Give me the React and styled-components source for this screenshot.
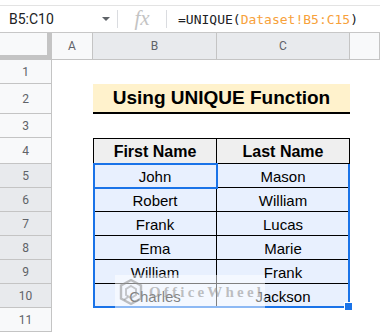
import React from 'react';
import styled, { createGlobalStyle } from 'styled-components';

const GlobalStyle = createGlobalStyle`
  html, body {
    margin: 0;
    padding: 0;
    background: #ffffff;
    font-family: Roboto, 'Noto Sans', sans-serif;
  }
`;

const Page = styled.div`
  width: 380px;
  height: 332px;
  overflow: hidden;
  position: relative;
  background: #fff;
`;

// formula bar
const FormulaBar = styled.div`
  margin-top: 5px;
  height: 28px;
  box-sizing: border-box;
  border-top: 1px solid #e3e3e3;
  border-bottom: 1px solid #c7c7c7;
  display: flex;
  align-items: center;
`;

const NameBox = styled.div`
  width: 117px;
  box-sizing: border-box;
  padding-left: 9px;
  padding-right: 7px;
  display: flex;
  align-items: center;
  justify-content: space-between;
  font-size: 14px;
  color: #202124;
`;

const Caret = styled.span`
  width: 0;
  height: 0;
  border-left: 4px solid transparent;
  border-right: 4px solid transparent;
  border-top: 4px solid #5f6368;
`;

const Divider = styled.span`
  width: 1px;
  height: 18px;
  background: #dadce0;
`;

const Fx = styled.div`
  width: 48px;
  text-align: center;
  font-family: 'Liberation Serif', serif;
  font-style: italic;
  font-size: 21px;
  color: #c4c4c4;
  line-height: 1;
  padding-bottom: 2px;
`;

const Formula = styled.div`
  padding-left: 11px;
  font-family: 'DejaVu Sans Mono', 'Liberation Mono', monospace;
  font-size: 13px;
  color: #202124;
`;

const Ref = styled.span`
  color: #f7a13a;
`;

// sheet grid
const Sheet = styled.div`
  display: grid;
  grid-template-columns: 52px 41px 124px 133px 1fr;
  grid-template-rows: 27px 24px 30px 24px 26px repeat(7, 24px);
  position: relative;
`;

const Corner = styled.div`
  grid-column: 1;
  grid-row: 1;
  background: #f8f9fa;
  border-right: 5px solid #c4c4c4;
  border-bottom: 5px solid #c4c4c4;
`;

const ColHeader = styled.div`
  grid-row: 1;
  background: ${(p) => (p.$selected ? '#e8eaed' : '#f8f9fa')};
  border-right: 1px solid #c4c4c4;
  border-bottom: 1px solid #c4c4c4;
  display: flex;
  align-items: center;
  justify-content: center;
  font-size: 12px;
  color: #5f6368;
`;

const RowHeader = styled.div`
  grid-column: 1;
  background: ${(p) => (p.$selected ? '#e8eaed' : '#f8f9fa')};
  border-right: 1px solid #c4c4c4;
  border-bottom: 1px solid #c4c4c4;
  display: flex;
  align-items: center;
  justify-content: center;
  font-size: 12px;
  color: #5f6368;
`;

const Title = styled.div`
  grid-column: 3 / 5;
  grid-row: 3;
  background: #fff2cc;
  border-bottom: 2px solid #000;
  display: flex;
  align-items: center;
  justify-content: center;
  font-family: 'Liberation Sans', Arial, sans-serif;
  font-weight: bold;
  font-size: 19px;
  color: #000;
`;

const TableCell = styled.div`
  background: ${(p) => (p.$head ? '#efefef' : '#e8f0fe')};
  border-right: 1px solid #000;
  border-bottom: 1px solid #000;
  border-top: ${(p) => (p.$head ? '1px solid #000' : 'none')};
  border-left: ${(p) => (p.$first ? '1px solid #000' : 'none')};
  display: flex;
  align-items: center;
  justify-content: center;
  padding-top: 1px;
  font-family: 'Liberation Sans', Arial, sans-serif;
  font-weight: ${(p) => (p.$head ? 'bold' : 'normal')};
  font-size: ${(p) => (p.$head ? '16px' : '15px')};
  color: #000;
`;

const Selection = styled.div`
  grid-column: 3 / 5;
  grid-row: 6 / 12;
  border: 2px solid #1a73e8;
  border-top: none;
  position: relative;
  pointer-events: none;
`;

const Handle = styled.span`
  position: absolute;
  right: -4px;
  bottom: -4px;
  width: 7px;
  height: 7px;
  background: #1a73e8;
  box-shadow: 0 0 0 1px #fff;
`;

const ActiveCell = styled.div`
  grid-column: 3;
  grid-row: 6;
  margin: -1px -1px -1px 0;
  border: 2px solid #1a73e8;
  pointer-events: none;
`;

const Watermark = styled.div`
  position: absolute;
  left: 115px;
  top: 242px;
  width: 150px;
  height: 34px;
  background: rgba(255, 255, 255, 0.5);
  display: flex;
  align-items: center;
  gap: 5px;
  padding-left: 3px;
  box-sizing: border-box;
`;

const WatermarkText = styled.span`
  font-family: 'Liberation Serif', serif;
  font-weight: bold;
  font-size: 15px;
  letter-spacing: 3.2px;
  color: rgba(150, 150, 150, 0.6);
`;

const Logo = () => (
  <svg width="26" height="28" viewBox="0 0 26 28">
    <path d="M13 2 L23 7.5 L23 20.5 L13 26 L3 20.5 L3 7.5 Z" fill="none" stroke="rgba(140,140,140,0.55)" strokeWidth="2.4" />
    <path d="M13 8 L18 11 L18 17 L13 20 L8 17 L8 11 Z" fill="none" stroke="rgba(140,140,140,0.45)" strokeWidth="2" />
    <path d="M6 22 L10 19" stroke="rgba(140,140,140,0.45)" strokeWidth="2" />
  </svg>
);

const rowNumbers = [1, 2, 3, 4, 5, 6, 7, 8, 9, 10, 11];
const people = [
  ['John', 'Mason'],
  ['Robert', 'William'],
  ['Frank', 'Lucas'],
  ['Ema', 'Marie'],
  ['William', 'Frank'],
  ['Charles', 'Jackson'],
];

const App = () => {
  return (
    <Page>
      <GlobalStyle />
      <FormulaBar>
        <NameBox>
          <span>B5:C10</span>
          <Caret />
        </NameBox>
        <Divider />
        <Fx>fx</Fx>
        <Divider />
        <Formula>
          =UNIQUE(<Ref>Dataset!B5:C15</Ref>)
        </Formula>
      </FormulaBar>

      <Sheet>
        <Corner />
        <ColHeader style={{ gridColumn: 2 }}>A</ColHeader>
        <ColHeader style={{ gridColumn: 3 }} $selected>B</ColHeader>
        <ColHeader style={{ gridColumn: 4 }} $selected>C</ColHeader>
        <ColHeader style={{ gridColumn: 5 }} />

        {rowNumbers.map((n) => (
          <RowHeader key={n} style={{ gridRow: n + 1 }} $selected={n >= 5 && n <= 10}>
            {n}
          </RowHeader>
        ))}

        <Title>Using UNIQUE Function</Title>

        <TableCell $head $first style={{ gridColumn: 3, gridRow: 5 }}>First Name</TableCell>
        <TableCell $head style={{ gridColumn: 4, gridRow: 5 }}>Last Name</TableCell>

        {people.map(([first, last], i) => (
          <React.Fragment key={first + i}>
            <TableCell $first style={{ gridColumn: 3, gridRow: i + 6 }}>{first}</TableCell>
            <TableCell style={{ gridColumn: 4, gridRow: i + 6 }}>{last}</TableCell>
          </React.Fragment>
        ))}

        <Selection>
          <Handle />
        </Selection>
        <ActiveCell />

        <Watermark>
          <Logo />
          <WatermarkText>OfficeWheel</WatermarkText>
        </Watermark>
      </Sheet>
    </Page>
  );
};

export default App;
